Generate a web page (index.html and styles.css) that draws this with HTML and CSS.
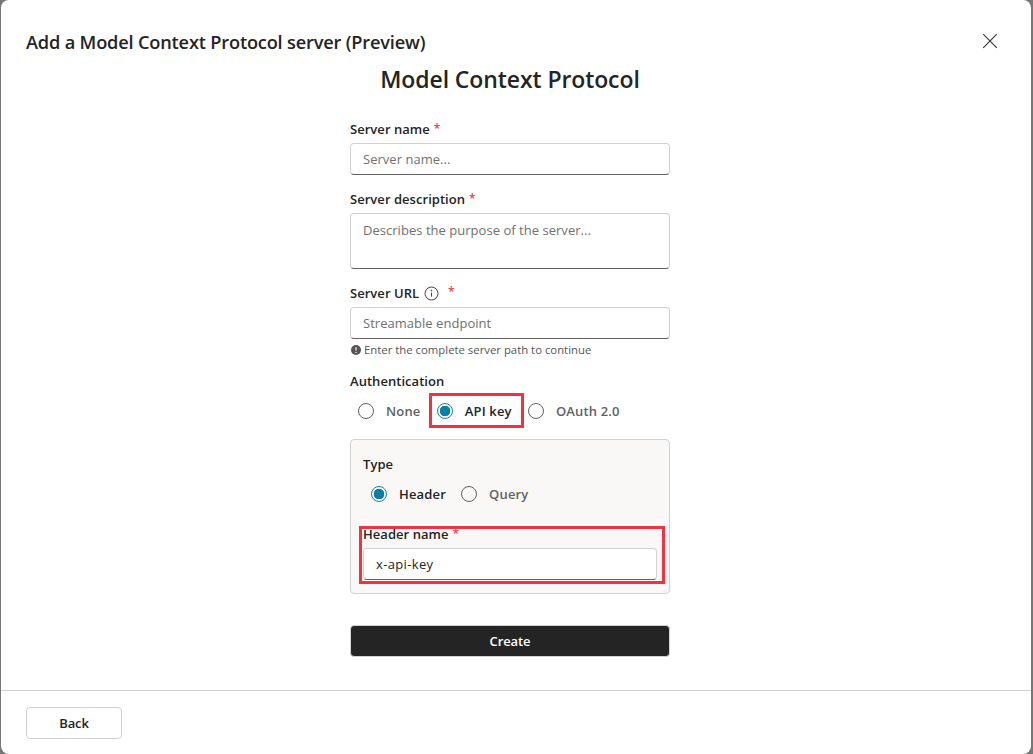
FILE: index.html
```html
<!DOCTYPE html>
<html lang="en">
<head>
<meta charset="utf-8">
<title>Add a Model Context Protocol server</title>
<link rel="stylesheet" href="styles.css">
</head>
<body>
<div class="dialog">
  <header class="dialog-header">
    <h1 class="dialog-title">Add a Model Context Protocol server (Preview)</h1>
    <button class="close" type="button" aria-label="Close">
      <svg width="16" height="16" viewBox="0 0 16 16"><path d="M1.2 1.2 14.8 14.8M14.8 1.2 1.2 14.8" stroke="#333" stroke-width="1.1" fill="none"/></svg>
    </button>
  </header>
  <main class="dialog-body">
    <form class="form">
      <h2 class="form-heading">Model Context Protocol</h2>
      <div class="field field-name">
        <label class="label">Server name<span class="req">*</span></label>
        <div class="input placeholder">Server name...</div>
      </div>
      <div class="field field-desc">
        <label class="label">Server description<span class="req">*</span></label>
        <div class="input textarea placeholder">Describes the purpose of the server...</div>
      </div>
      <div class="field field-url">
        <label class="label">Server URL<svg class="info" width="15" height="15" viewBox="0 0 15 15"><circle cx="7.5" cy="7.5" r="6.5" fill="none" stroke="#444" stroke-width="1"/><path d="M7.5 6.6v4" stroke="#444" stroke-width="1.1"/><circle cx="7.5" cy="4.6" r=".8" fill="#444"/></svg><span class="req req-url">*</span></label>
        <div class="input placeholder">Streamable endpoint</div>
        <div class="hint">
          <svg width="10" height="10" viewBox="0 0 10 10"><circle cx="5" cy="5" r="5" fill="#555"/><path d="M5 2.2v3.4" stroke="#fff" stroke-width="1.2"/><circle cx="5" cy="7.4" r=".7" fill="#fff"/></svg>
          Enter the complete server path to continue
        </div>
      </div>
      <div class="field field-auth">
        <label class="label">Authentication</label>
        <div class="radios">
          <span class="radio"><span class="dot"></span>None</span>
          <span class="radio on marked"><span class="dot"></span>API key<span class="mark mark-api"></span></span>
          <span class="radio"><span class="dot"></span>OAuth 2.0</span>
        </div>
      </div>
      <section class="panel">
        <label class="label">Type</label>
        <div class="radios radios-type">
          <span class="radio on"><span class="dot"></span>Header</span>
          <span class="radio"><span class="dot"></span>Query</span>
        </div>
        <div class="field field-header marked">
          <label class="label">Header name<span class="req">*</span></label>
          <div class="input value">x-api-key</div>
          <span class="mark mark-header"></span>
        </div>
      </section>
      <button class="create" type="button">Create</button>
    </form>
  </main>
  <footer class="dialog-footer">
    <button class="back" type="button">Back</button>
  </footer>
</div>
</body>
</html>
```
FILE: styles.css
```css
* { box-sizing: border-box; }
html, body { height: 100%; }
body {
  margin: 0;
  background: #777;
  font-family: "Open Sans", "Noto Sans", "Liberation Sans", sans-serif;
  color: #242424;
  overflow: hidden;
}
.dialog {
  height: 754px;
  margin: 0 2px 0 1px;
  background: #fff;
  border-radius: 8px;
  display: flex;
  flex-direction: column;
  overflow: hidden;
}
.dialog-header {
  height: 63px;
  flex: none;
  display: flex;
  align-items: flex-start;
  justify-content: space-between;
  padding: 29px 33px 0 25px;
}
.dialog-title {
  margin: 0;
  font-size: 18.2px;
  line-height: 26px;
  font-weight: 600;
  letter-spacing: -0.18px;
}
.close {
  border: 0;
  background: none;
  padding: 0;
  margin-top: 4px;
  width: 16px;
  height: 16px;
  display: flex;
}
.dialog-body {
  flex: 1;
  min-height: 0;
  overflow: hidden;
}
.form {
  width: 320px;
  margin-left: 349px;
  display: flex;
  flex-direction: column;
}
.form-heading {
  margin: 0;
  height: 35px;
  font-size: 23px;
  line-height: 32px;
  font-weight: 600;
  text-align: center;
  letter-spacing: -0.1px;
  white-space: nowrap;
}
.label {
  display: flex;
  align-items: center;
  gap: 4px;
  font-size: 13px;
  line-height: 18px;
  font-weight: 600;
  letter-spacing: 0.04px;
}
.req { color: #e0444f; font-weight: 600; font-size: 12px; line-height: 12px; align-self: flex-start; margin-top: 3px; }
.req-url { margin-left: 5px; margin-top: 2px; }
.info { margin-left: 1px; }
.field { display: flex; flex-direction: column; }
.field-name { margin-top: 22px; gap: 5px; }
.field-desc { margin-top: 15px; gap: 5px; }
.field-url { margin-top: 15px; gap: 5px; }
.field-auth { margin-top: 15px; }
.input {
  height: 32px;
  border: 1px solid #d1d1d1;
  border-bottom-color: #616161;
  border-radius: 4px;
  background: #fff;
  padding: 0 12px;
  font-size: 13px;
  line-height: 30px;
  letter-spacing: 0.03px;
}
.textarea { height: 56px; padding-top: 1px; line-height: 30px; }
.placeholder { color: #707070; }
.value { color: #242424; letter-spacing: 0.35px; }
.hint {
  display: flex;
  align-items: center;
  gap: 3px;
  margin-top: -1px;
  padding-left: 1px;
  font-size: 11.35px;
  line-height: 14px;
  color: #555;
}
.radios {
  display: flex;
  align-items: center;
  height: 32px;
  margin-top: 5px;
  padding-left: 8px;
}
.radio {
  display: flex;
  align-items: center;
  gap: 12px;
  font-size: 13px;
  font-weight: 600;
  letter-spacing: 0.15px;
  color: #616161;
  margin-right: 16.3px;
  white-space: nowrap;
}
.radio:last-child { margin-right: 0; }
.radio.on { color: #242424; }
.dot {
  width: 16px;
  height: 16px;
  border: 1px solid #616161;
  border-radius: 50%;
  flex: none;
}
.on .dot {
  border-color: #0f7ea3;
  background: radial-gradient(circle, #0f7ea3 5px, #fff 5.6px);
}
.marked { position: relative; }
.mark {
  position: absolute;
  border: 3px solid #ee3344;
  pointer-events: none;
}
.mark-api { left: -8px; top: -9px; width: 95px; height: 35px; }
.mark-header { left: -4px; top: 1px; width: 306px; height: 58px; }
.panel {
  margin-top: 12px;
  height: 155px;
  background: #faf8f6;
  border: 1px solid #d1d1d1;
  border-radius: 4px;
  padding: 15px 12px 0 12px;
}
.radios-type { margin-top: 5px; }
.radios-type .radio { margin-right: 15.2px; }
.field-header { margin-top: 15px; gap: 5px; width: 294px; }
.create {
  margin-top: 31px;
  height: 32px;
  flex: none;
  border: 1px solid #d1d1d1;
  border-radius: 4px;
  background: #242424;
  color: #fff;
  font: 600 13px "Open Sans", "Noto Sans", sans-serif;
  letter-spacing: -0.1px;
}
.dialog-footer {
  height: 64px;
  flex: none;
  border-top: 1px solid #d1d1d1;
  padding: 16px 25px 0;
}
.back {
  width: 96px;
  height: 32px;
  background: #fff;
  border: 1px solid #d1d1d1;
  border-radius: 4px;
  color: #242424;
  font: 600 13px "Open Sans", "Noto Sans", sans-serif;
  letter-spacing: -0.1px;
}
```
